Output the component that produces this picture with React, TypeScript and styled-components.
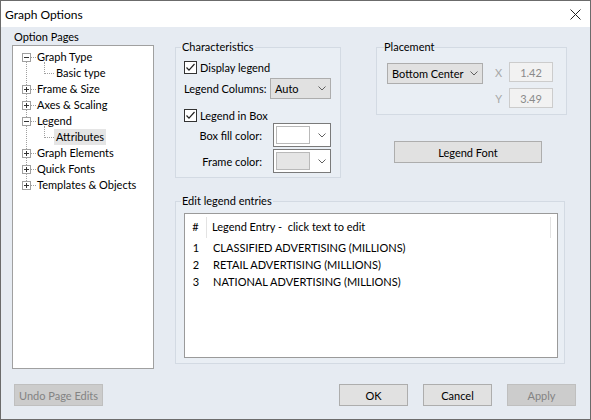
import { createGlobalStyle, styled } from "styled-components";

const GlobalStyle = createGlobalStyle`
  html, body {
    margin: 0;
    padding: 0;
    background: #ffffff;
  }
  body {
    font-family: Lato, "Noto Sans", sans-serif;
    font-size: 11px;
    color: #000;
  }
  * {
    box-sizing: border-box;
  }
`

const Window = styled.div`
  width: 591px;
  height: 420px;
  border: 1px solid #6b6b6b;
  display: flex;
  flex-direction: column;
  background: #e6ebf2;
`

const TitleBar = styled.div`
  height: 26px;
  flex: none;
  background: #fff;
  display: flex;
  align-items: center;
  justify-content: space-between;
  padding: 0 9px 0 4px;
  font-size: 12px;
`

const Main = styled.div`
  flex: 1;
  min-height: 0;
  display: flex;
`

const LeftPane = styled.div`
  margin-left: 11px;
  width: 142px;
  padding-top: 3px;
`

const PaneLabel = styled.div`
  height: 15px;
  line-height: 14px;
  padding-left: 2px;
`

const TreeBox = styled.div`
  height: 324px;
  background: #fff;
  border: 1px solid #a0a0a0;
  padding-top: 3px;
`

const TreeList = styled.div`
  position: relative;
  &::before {
    content: "";
    position: absolute;
    left: 13px;
    top: 8px;
    bottom: 8px;
    border-left: 1px dotted #a0a0a0;
  }
`

const TreeRow = styled.div<{ $level: number }>`
  position: relative;
  height: 16px;
  display: flex;
  align-items: center;
  padding-left: ${(p) => (p.$level === 0 ? 9 : 31)}px;
  white-space: nowrap;
`

const Dash = styled.span`
  width: 5px;
  border-top: 1px dotted #a0a0a0;
`

const Elbow = styled.span`
  align-self: flex-start;
  margin-top: -3px;
  width: 10px;
  height: 12px;
  border-left: 1px dotted #a0a0a0;
  border-bottom: 1px dotted #a0a0a0;
`

const NodeText = styled.span<{ $selected?: boolean }>`
  height: 16px;
  line-height: 16px;
  padding: 0 2px;
  margin-left: ${(p) => (p.$selected !== undefined ? 0 : -1)}px;
  background: ${(p) => (p.$selected ? "#e5e5e5" : "transparent")};
`

const RightPane = styled.div`
  margin-left: 21px;
  padding-top: 13px;
  display: flex;
  flex-direction: column;
`

const TopRow = styled.div`
  display: flex;
  align-items: flex-start;
  gap: 35px;
`

const Group = styled.fieldset<{ $width: number }>`
  width: ${(p) => p.$width}px;
  margin: 0;
  min-width: 0;
  border: 1px solid #d3dae3;
  background: #e9eef4;
  padding: 6px 8px 4px 8px;
  display: flex;
  flex-direction: column;
`

const GroupTitle = styled.legend`
  padding: 0 1px;
  margin-left: -3px;
  line-height: 14px;
`

const CheckRow = styled.label`
  height: 14px;
  display: flex;
  align-items: center;
  gap: 3px;
  white-space: nowrap;
`

const FieldRow = styled.div<{ $top: number }>`
  margin-top: ${(p) => p.$top}px;
  display: flex;
  align-items: center;
`

const FieldLabel = styled.span<{ $width: number; $right?: boolean }>`
  width: ${(p) => p.$width}px;
  flex: none;
  white-space: nowrap;
  text-align: ${(p) => (p.$right ? "right" : "left")};
  margin-right: ${(p) => (p.$right ? 11 : 0)}px;
`

const Dropdown = styled.div<{ $width: number }>`
  width: ${(p) => p.$width}px;
  height: 21px;
  flex: none;
  white-space: nowrap;
  background: #e1e1e1;
  border: 1px solid #adadad;
  display: flex;
  align-items: center;
  justify-content: space-between;
  padding: 0 4px 0 4px;
`

const ColorCombo = styled.div`
  width: 58px;
  height: 24px;
  background: #fff;
  border: 1px solid #7a7a7a;
  display: flex;
  align-items: center;
  justify-content: space-between;
  padding: 0 4px 0 2px;
`

const Swatch = styled.span<{ $color: string }>`
  width: 34px;
  height: 18px;
  background: ${(p) => p.$color};
  border: 1px solid #b9b9b9;
`

const PlacementCol = styled.div`
  display: flex;
  flex-direction: column;
  align-items: flex-start;
`

const PlacementGroup = styled(Group)`
  padding: 8px 8px 6px 7px;
  flex-direction: row;
  align-items: flex-start;
`

const PlacementTitle = styled(GroupTitle)`
  margin-left: 0;
  padding: 0;
`

const PlacementSelect = styled(Dropdown)`
  margin-top: 1px;
  margin-left: 3px;
`

const CoordCol = styled.div`
  margin-left: 12px;
  display: flex;
  flex-direction: column;
  gap: 6px;
`

const CoordRow = styled.div`
  display: flex;
  align-items: center;
`

const CoordLabel = styled.span`
  width: 14px;
  padding-right: 7px;
  text-align: right;
  color: #a8a8a8;
`

const NumberBox = styled.div`
  width: 44px;
  height: 20px;
  border: 1px solid #cccccc;
  background: #f2f2f2;
  color: #8a8a8a;
  display: flex;
  align-items: center;
  justify-content: center;
`

const Button = styled.button<{ $width: number }>`
  width: ${(p) => p.$width}px;
  height: 22px;
  font: inherit;
  color: #000;
  background: #e1e1e1;
  border: 1px solid #adadad;
  padding: 0;
  &:disabled {
    color: #838383;
    background: #cccccc;
    border-color: #bfbfbf;
  }
`

const FontButton = styled(Button)`
  margin-top: 26px;
  margin-left: 18px;
`

const EntriesGroup = styled(Group)`
  margin-top: 16px;
  padding: 5px 6px 5px 8px;
`

const EntryList = styled.div`
  width: 374px;
  height: 145px;
  background: #fff;
  border: 1px solid #9a9a9a;
`

const HeadRow = styled.div`
  height: 24px;
  display: flex;
  padding-top: 3px;
`

const NumCell = styled.span`
  width: 22px;
  text-align: center;
`

const HeadNum = styled(NumCell)`
  border-right: 1px solid #e3e3e3;
  line-height: 20px;
`

const HeadText = styled.span`
  width: 344px;
  padding-left: 5px;
  line-height: 20px;
  border-right: 1px solid #e3e3e3;
`

const EntryRows = styled.div`
  margin-top: 1px;
`

const EntryRow = styled.div`
  height: 17px;
  line-height: 17px;
  display: flex;
`

const EntryText = styled.span`
  padding-left: 6px;
`

const Footer = styled.div`
  height: 50px;
  flex: none;
  display: flex;
  align-items: flex-start;
  padding: 15px 14px 0 13px;
  gap: 15px;
`

const Spacer = styled.div`
  flex: 1;
`

const Chevron = () => (
  <svg width="8" height="5" viewBox="0 0 8 5">
    <path d="M0.5 0.5 L4 4 L7.5 0.5" fill="none" stroke="#606060" />
  </svg>
)

const CheckBox = () => (
  <svg width="13" height="13" viewBox="0 0 13 13">
    <rect x="0.5" y="0.5" width="12" height="12" fill="#fff" stroke="#333" />
    <path d="M2.5 6.5 L5 9.2 L10.5 3" fill="none" stroke="#222" strokeWidth="1.2" />
  </svg>
)

const Expander = ({ open }: { open: boolean }) => (
  <svg width="9" height="9" viewBox="0 0 9 9">
    <rect x="0.5" y="0.5" width="8" height="8" fill="#fff" stroke="#a0a0a0" />
    <path d="M2 4.5 H7" stroke="#333" />
    {!open && <path d="M4.5 2 V7" stroke="#333" />}
  </svg>
)

const CloseIcon = () => (
  <svg width="11" height="11" viewBox="0 0 11 11">
    <path d="M0.5 0.5 L10.5 10.5 M10.5 0.5 L0.5 10.5" stroke="#222" strokeWidth="1" />
  </svg>
)

type Node = { label: string; open?: boolean; children?: string[] }

const tree: Node[] = [
  { label: "Graph Type", open: true, children: ["Basic type"] },
  { label: "Frame & Size" },
  { label: "Axes & Scaling" },
  { label: "Legend", open: true, children: ["Attributes"] },
  { label: "Graph Elements" },
  { label: "Quick Fonts" },
  { label: "Templates & Objects" },
]

const entries = [
  "CLASSIFIED ADVERTISING (MILLIONS)",
  "RETAIL ADVERTISING (MILLIONS)",
  "NATIONAL ADVERTISING (MILLIONS)",
]

export default function App() {
  return (
    <>
      <GlobalStyle />
      <Window>
        <TitleBar>
          <span>Graph Options</span>
          <CloseIcon />
        </TitleBar>
        <Main>
          <LeftPane>
            <PaneLabel>Option Pages</PaneLabel>
            <TreeBox>
              <TreeList>
                {tree.map((node) => (
                  <div key={node.label}>
                    <TreeRow $level={0}>
                      <Expander open={!!node.open} />
                      <Dash />
                      <NodeText>{node.label}</NodeText>
                    </TreeRow>
                    {node.children?.map((child) => (
                      <TreeRow $level={1} key={child}>
                        <Elbow />
                        <NodeText $selected={child === "Attributes"}>{child}</NodeText>
                      </TreeRow>
                    ))}
                  </div>
                ))}
              </TreeList>
            </TreeBox>
          </LeftPane>
          <RightPane>
            <TopRow>
              <Group $width={166}>
                <GroupTitle>Characteristics</GroupTitle>
                <CheckRow>
                  <CheckBox />
                  Display legend
                </CheckRow>
                <FieldRow $top={4}>
                  <FieldLabel $width={86}>Legend Columns:</FieldLabel>
                  <Dropdown $width={61}>
                    Auto
                    <Chevron />
                  </Dropdown>
                </FieldRow>
                <FieldRow $top={9}>
                  <CheckRow>
                    <CheckBox />
                    Legend in Box
                  </CheckRow>
                </FieldRow>
                <FieldRow $top={1}>
                  <FieldLabel $width={78} $right>Box fill color:</FieldLabel>
                  <ColorCombo>
                    <Swatch $color="#ffffff" />
                    <Chevron />
                  </ColorCombo>
                </FieldRow>
                <FieldRow $top={2}>
                  <FieldLabel $width={78} $right>Frame color:</FieldLabel>
                  <ColorCombo>
                    <Swatch $color="#e5e5e5" />
                    <Chevron />
                  </ColorCombo>
                </FieldRow>
              </Group>
              <PlacementCol>
                <PlacementGroup $width={191}>
                  <PlacementTitle>Placement</PlacementTitle>
                  <PlacementSelect $width={96}>
                    Bottom Center
                    <Chevron />
                  </PlacementSelect>
                  <CoordCol>
                    <CoordRow>
                      <CoordLabel>X</CoordLabel>
                      <NumberBox>1.42</NumberBox>
                    </CoordRow>
                    <CoordRow>
                      <CoordLabel>Y</CoordLabel>
                      <NumberBox>3.49</NumberBox>
                    </CoordRow>
                  </CoordCol>
                </PlacementGroup>
                <FontButton $width={148}>Legend Font</FontButton>
              </PlacementCol>
            </TopRow>
            <EntriesGroup $width={390}>
              <GroupTitle>Edit legend entries</GroupTitle>
              <EntryList>
                <HeadRow>
                  <HeadNum>#</HeadNum>
                  <HeadText>Legend Entry -&nbsp; click text to edit</HeadText>
                </HeadRow>
                <EntryRows>
                  {entries.map((text, i) => (
                    <EntryRow key={text}>
                      <NumCell>{i + 1}</NumCell>
                      <EntryText>{text}</EntryText>
                    </EntryRow>
                  ))}
                </EntryRows>
              </EntryList>
            </EntriesGroup>
          </RightPane>
        </Main>
        <Footer>
          <Button $width={89} disabled>Undo Page Edits</Button>
          <Spacer />
          <Button $width={69}>OK</Button>
          <Button $width={69}>Cancel</Button>
          <Button $width={69} disabled>Apply</Button>
        </Footer>
      </Window>
    </>
  )
}
